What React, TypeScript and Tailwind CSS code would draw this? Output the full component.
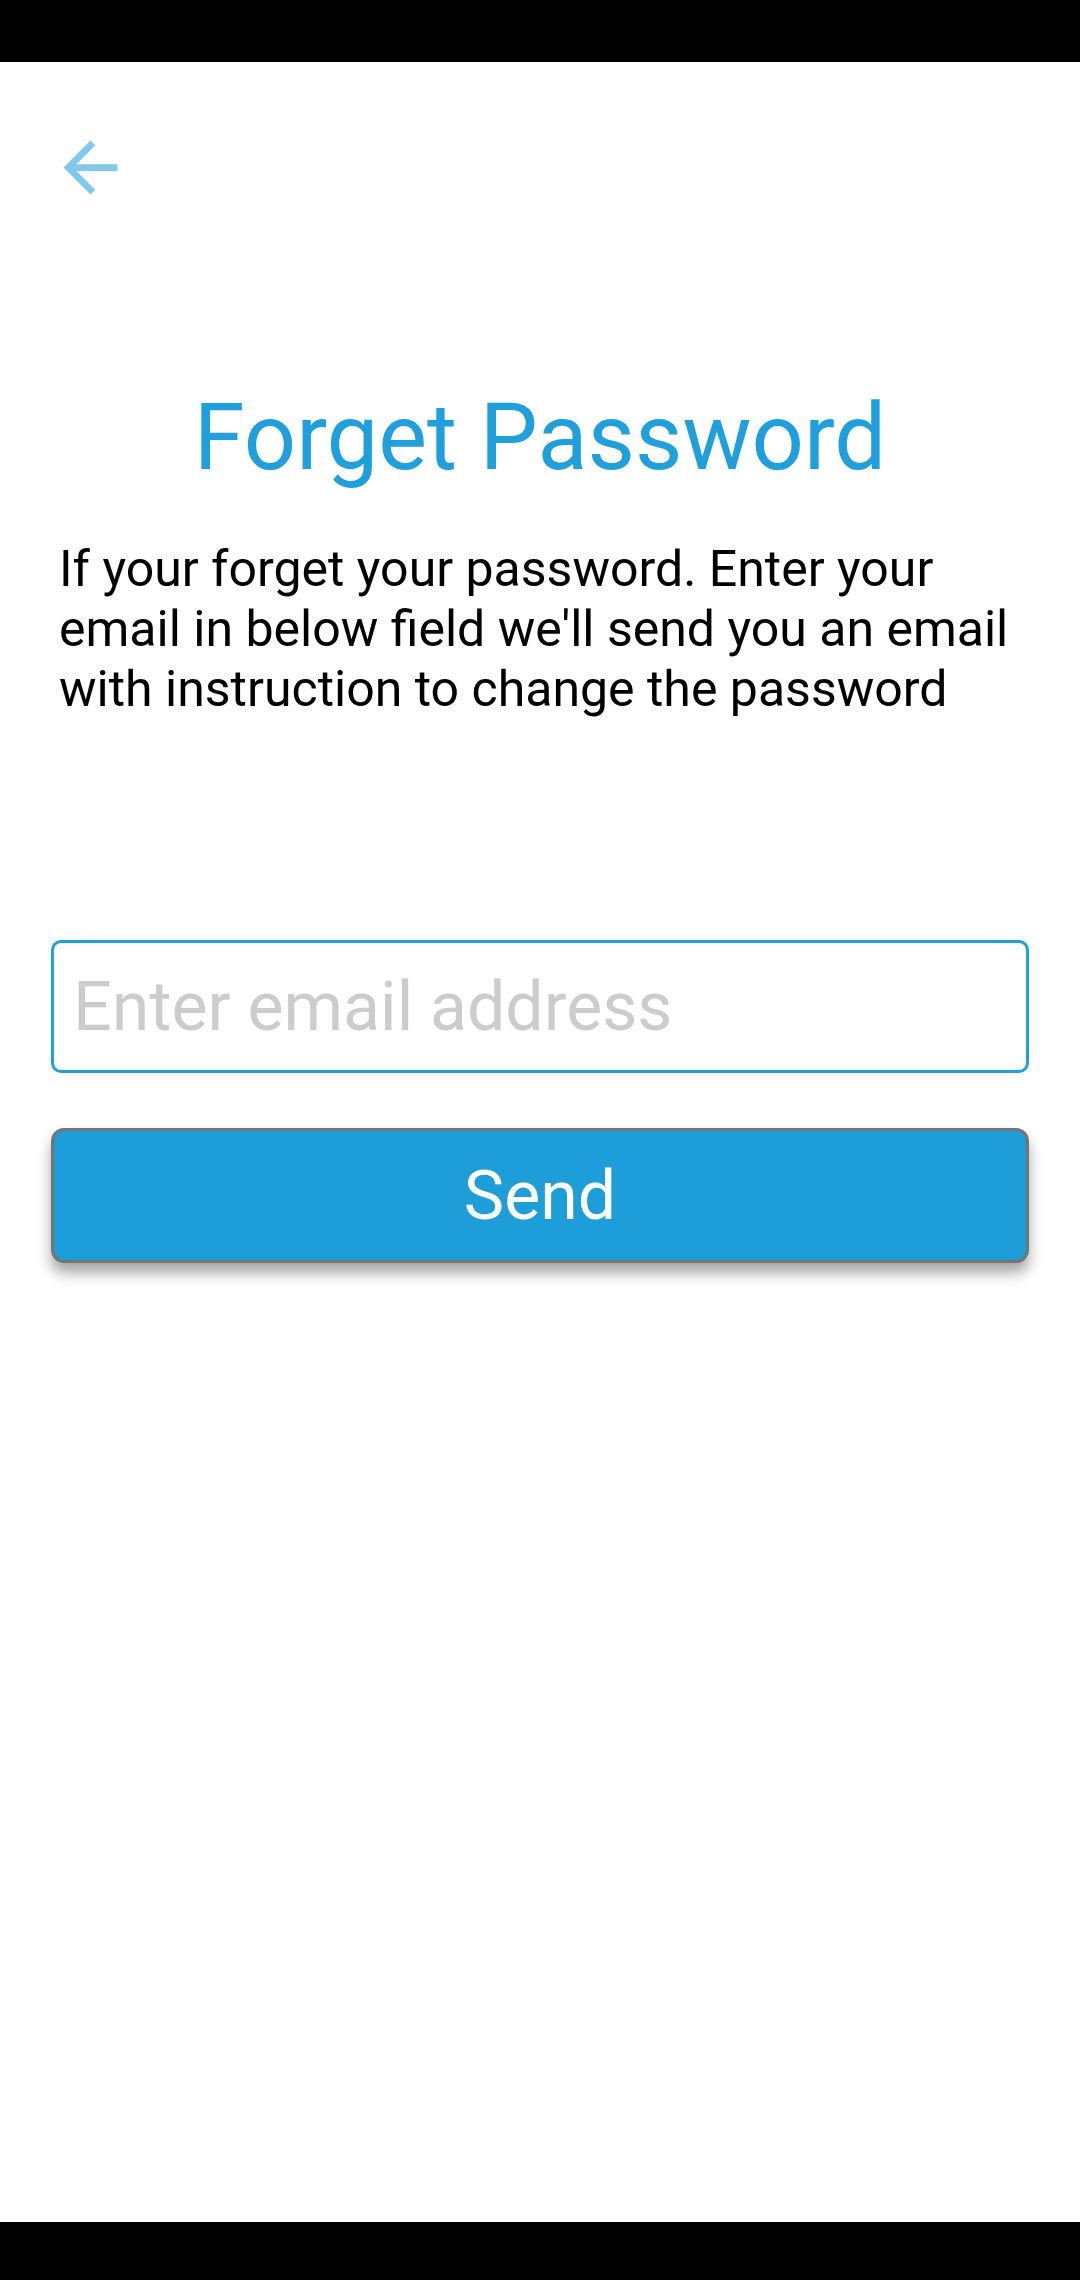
import React from "react";

export default function App() {
  return (
    <div
      className="w-[1080px] h-[2280px] flex flex-col bg-white overflow-hidden"
      style={{ fontFamily: "Roboto, 'Noto Sans', sans-serif" }}
    >
      <div className="h-[62px] bg-black shrink-0" />
      <div className="flex-1 flex flex-col">
        <div className="pt-[65px] pl-[50px]">
          <button className="block w-[81px] h-[81px]" aria-label="Back">
            <svg viewBox="0 0 24 24" width="81" height="81">
              <path
                d="M20 11H7.83l5.59-5.59L12 4l-8 8 8 8 1.41-1.41L7.83 13H20v-2z"
                fill="#80c8ec"
              />
            </svg>
          </button>
        </div>
        <h1 className="mt-[184px] text-center text-[92px] leading-none text-[#1f9fdb] font-normal">
          Forget Password
        </h1>
        <p className="mt-[55px] px-[59px] text-[50px] leading-[60px] text-black whitespace-nowrap">
          If your forget your password. Enter your
          <br />
          email in below field we'll send you an email
          <br />
          with instruction to change the password
        </p>
        <div className="mt-[221px] mx-[51px] h-[133px] border-[3px] border-[#1f9fdb] rounded-[10px] flex items-center pl-[19px] pr-[19px]">
          <input
            type="email"
            placeholder="Enter email address"
            className="w-full bg-transparent outline-none text-[68px] text-[#333] placeholder:text-[#cccccc]"
            style={{ fontFamily: "Roboto, sans-serif" }}
          />
        </div>
        <button className="mt-[55px] mx-[51px] h-[135px] border-[3px] border-[#757575] rounded-[13px] bg-[#1e9ed9] flex items-center justify-center text-white text-[68px] shadow-[0_10px_14px_rgba(0,0,0,0.35)]">
          <span className="leading-none">Send</span>
        </button>
      </div>
      <div className="h-[58px] bg-black shrink-0" />
    </div>
  );
}
